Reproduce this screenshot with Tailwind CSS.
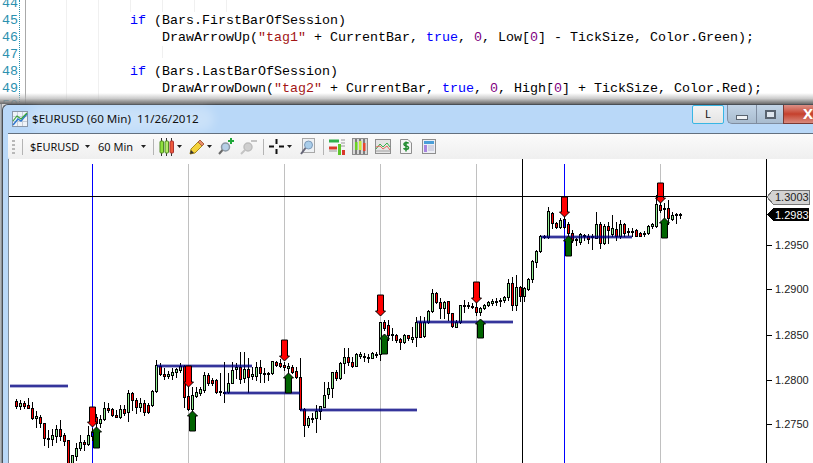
<!doctype html>
<html>
<head>
<meta charset="utf-8">
<script src="https://cdn.jsdelivr.net/npm/@tailwindcss/browser@4"></script>
</head>
<body class="m-0 bg-white">
<div class="w-[813px] h-[463px] overflow-hidden flex flex-col bg-white">

  <!-- code editor -->
  <div class="relative h-[104px] shrink-0 overflow-hidden flex font-['Liberation_Mono',monospace] text-[13.33px] leading-[17px] text-black">
    <div class="w-[26px] shrink-0 pl-[2px] text-[#2b91af] border-r border-[#a9a9a9] -mt-[5px]">
      <div>44</div><div>45</div><div>46</div><div>47</div><div>48</div><div>49</div><div>50</div>
    </div>
    <div class="absolute left-[19px] top-0 bottom-0 border-l border-dotted border-[#2b91af]"></div>
    <div class="absolute left-[66px] top-0 bottom-0 border-l border-[#f0f0f0]"></div>
    <div class="absolute left-[98px] top-0 bottom-0 border-l border-[#f0f0f0]"></div>
    <div class="absolute left-[130px] top-0 h-[12px] border-l border-[#f0f0f0]"></div>
    <div class="absolute left-[162px] top-0 h-[12px] border-l border-[#f0f0f0]"></div>
    <div class="absolute left-[162px] top-[46px] h-[12px] border-l border-[#f0f0f0]"></div>
    <div class="absolute left-[194px] top-0 h-[12px] border-l border-[#f0f0f0]"></div>
    <div class="absolute left-[226px] top-0 h-[12px] border-l border-[#f0f0f0]"></div>
    <div class="flex-1 pl-[104px] -mt-[5px]">
      <div class="h-[17px]"></div>
      <div class="whitespace-pre"><span class="text-[#0000ff]">if</span> (Bars.FirstBarOfSession)</div>
      <div class="whitespace-pre">    DrawArrowUp(<span class="text-[#a31515]">"tag1"</span> + CurrentBar, <span class="text-[#0000ff]">true</span>, <span class="text-[#800080]">0</span>, Low[<span class="text-[#800080]">0</span>] - TickSize, Color.Green);</div>
      <div class="h-[17px]"></div>
      <div class="whitespace-pre"><span class="text-[#0000ff]">if</span> (Bars.LastBarOfSession)</div>
      <div class="whitespace-pre">    DrawArrowDown(<span class="text-[#a31515]">"tag2"</span> + CurrentBar, <span class="text-[#0000ff]">true</span>, <span class="text-[#800080]">0</span>, High[<span class="text-[#800080]">0</span>] + TickSize, Color.Red);</div>
    </div>
    <div class="absolute left-0 right-0 bottom-0 h-[11px] bg-gradient-to-b from-white/0 via-[#b5b5b5]/70 to-[#6a6a6a]"></div>
  </div>

  <div class="flex-1 flex bg-[#d8d8d8] min-h-0">
    <div class="w-[2px] shrink-0 bg-gradient-to-r from-[#c4c8cc] to-[#7c8288]"></div>

    <!-- chart window -->
    <div class="relative flex-1 flex flex-col border-t border-l border-[#4a4f55] rounded-tl-[6px] bg-[#b9d8f8] font-['Noto_Sans','Open_Sans',sans-serif] text-[#111]">

      <!-- title bar -->
      <div class="relative h-[28px] shrink-0 flex items-center pl-[9px] gap-[4px]">
        <div class="absolute left-[26px] top-[2px] w-[185px] h-[24px] bg-white/25 blur-[5px] rounded-full"></div>
        <svg class="relative w-[16px] h-[16px] shrink-0" viewBox="0 0 16 16">
          <rect x=".5" y=".5" width="15" height="15" fill="#eef3f8" stroke="#8a97a8"/>
          <path d="M1 5.500h14M1 10.500h14M5.500 1v14M10.500 1v14" stroke="#c5cdd8" stroke-width="1"/>
          <path d="M1 14 6 8l3 2 6-7" fill="none" stroke="#2f78d0" stroke-width="1.500"/>
          <path d="M1 10 5 5l4 3 6-6" fill="none" stroke="#3aa53a" stroke-width="1.200"/>
        </svg>
        <span class="relative text-[11.6px] leading-none whitespace-pre">$EURUSD (60 Min)  11/26/2012</span>
        <div class="absolute right-0 top-0 flex h-[19px]">
          <div class="w-[32px] h-[19px] flex items-center justify-center border border-[#38b6e4] rounded-[2px] bg-gradient-to-b from-[#f4f4f4] to-[#e4e4e4] text-[11px] text-[#111] mr-[3px]">L</div>
          <div class="w-[29px] flex items-center justify-center bg-gradient-to-b from-[#c2d4e6] to-[#a9bccf] border-l border-b border-[#7f8da0] rounded-bl-[5px]">
            <div class="w-[12px] h-[5px] mt-[6px] bg-[#f0f3f6] border border-[#59636f]"></div>
          </div>
          <div class="w-[27px] flex items-center justify-center bg-gradient-to-b from-[#c2d4e6] to-[#a9bccf] border-l border-b border-[#7f8da0]">
            <div class="w-[11px] h-[9px] border-2 border-[#59636f] bg-[#dfe6ee]"></div>
          </div>
          <div class="w-[30px] flex items-start justify-end bg-gradient-to-b from-[#dc8f86] via-[#c5402c] to-[#d8897e] border-l border-b border-[#7a3a34] text-white text-[15px] leading-[17px] font-bold">X</div>
        </div>
      </div>

      <!-- toolbar -->
      <div class="relative ml-[5px] h-[26px] shrink-0 flex items-center border-t border-[#63707f] bg-gradient-to-b from-[#fbfbfb] to-[#efefef] text-[11px] leading-none rounded-bl-[2px] whitespace-nowrap">
        <div class="flex flex-col gap-[2px] ml-[4px] mr-[7px]">
          <i class="block w-[3px] h-[2px] bg-[#b8b8b8]"></i><i class="block w-[3px] h-[2px] bg-[#b8b8b8]"></i><i class="block w-[3px] h-[2px] bg-[#b8b8b8]"></i><i class="block w-[3px] h-[2px] bg-[#b8b8b8]"></i>
        </div>
        <div class="w-px h-[16px] bg-[#b4b4b4] mr-[7px]"></div>
        <span class="w-[49px] shrink-0">$EURUSD</span>
        <svg class="w-[5px] h-[3px] ml-[6px] mr-[8px]" viewBox="0 0 5 3"><path d="M0 0h5L2.500 3z" fill="#222"/></svg>
        <span class="w-[37px] shrink-0">60 Min</span>
        <svg class="w-[5px] h-[3px] ml-[6px] mr-[7px]" viewBox="0 0 5 3"><path d="M0 0h5L2.500 3z" fill="#222"/></svg>
        <div class="w-px h-[16px] bg-[#b4b4b4] mr-[5px]"></div>
        <svg class="w-[15px] h-[18px]" viewBox="0 0 15 18">
          <path d="M2.500 0v18M7.500 0v18M12.500 0v18" stroke="#333"/>
          <rect x="1" y="3" width="3.500" height="12" rx="1" fill="#8fe03c" stroke="#4f8a22"/>
          <rect x="6" y="3" width="3.500" height="12" rx="1" fill="#b4ec6a" stroke="#4f8a22"/>
          <rect x="11" y="3" width="3.500" height="12" rx="1" fill="#ef5a3c" stroke="#a33"/>
        </svg>
        <svg class="w-[5px] h-[3px] ml-[3px] mr-[7px]" viewBox="0 0 5 3"><path d="M0 0h5L2.500 3z" fill="#222"/></svg>
        <svg class="w-[16px] h-[16px]" viewBox="0 0 16 16">
          <path d="M1 15l1-5L11 1l4 4-9 9z" fill="#f5d33c" stroke="#a98a1e"/>
          <path d="M11 1l4 4-2 2-4-4z" fill="#e88d6a" stroke="#a8623f"/>
          <path d="M1 15l1-4 3 3z" fill="#333"/>
        </svg>
        <svg class="w-[5px] h-[3px] ml-[2px] mr-[6px]" viewBox="0 0 5 3"><path d="M0 0h5L2.500 3z" fill="#222"/></svg>
        <svg class="w-[17px] h-[17px]" viewBox="0 0 17 17">
          <circle cx="7.500" cy="9" r="4" fill="#b6cfe6" stroke="#8c98a4" stroke-width="1.500"/>
          <path d="M4.500 12 1 16" stroke="#6a6a6a" stroke-width="2"/>
          <path d="M13 0v6M10 3h6" stroke="#1fa83a" stroke-width="2"/>
        </svg>
        <svg class="w-[17px] h-[17px] ml-[5px]" viewBox="0 0 17 17">
          <circle cx="8" cy="9" r="4" fill="#cfcfcf" stroke="#bdbdbd" stroke-width="1.500"/>
          <path d="M5 12 1 16" stroke="#c4c4c4" stroke-width="2"/>
          <path d="M11 3h6" stroke="#c4c4c4" stroke-width="2"/>
        </svg>
        <div class="w-px h-[16px] bg-[#b4b4b4] ml-[6px] mr-[5px]"></div>
        <svg class="w-[15px] h-[15px]" viewBox="0 0 15 15">
          <path d="M0 7.500h5M10 7.500h5M7.500 0v5M7.500 10v5" stroke="#111" stroke-width="2"/>
        </svg>
        <svg class="w-[5px] h-[3px] ml-[3px] mr-[8px]" viewBox="0 0 5 3"><path d="M0 0h5L2.500 3z" fill="#222"/></svg>
        <svg class="w-[15px] h-[17px]" viewBox="0 0 15 17">
          <rect x="2.500" y=".5" width="12" height="14" fill="#eef1f4" stroke="#a8a8a8"/>
          <circle cx="8.500" cy="7" r="4" fill="#a9cdea" stroke="#7e9ab8"/>
          <path d="M5.500 10 1 16" stroke="#667" stroke-width="2"/>
        </svg>
        <div class="w-px h-[16px] bg-[#b4b4b4] ml-[8px] mr-[5px]"></div>
        <svg class="w-[16px] h-[17px]" viewBox="0 0 16 17">
          <path d="M0 3h10" stroke="#2fb04a" stroke-width="3"/>
          <path d="M0 10h8" stroke="#d9392b" stroke-width="3"/>
          <rect x="9" y="6" width="3" height="11" fill="#5ec52a"/>
          <rect x="13" y="12" width="3" height="5" fill="#d9392b"/>
          <path d="M12 2h4M12 5h4M12 8h4M0 13h8" stroke="#999"/>
        </svg>
        <svg class="w-[16px] h-[17px] ml-[7px]" viewBox="0 0 16 17">
          <rect x=".5" y=".5" width="15" height="16" fill="#d8d8d8" stroke="#8e8e8e"/>
          <path d="M4 1v15M8 1v15M12 1v15" stroke="#222"/>
          <rect x="3" y="4" width="2.500" height="8" fill="#69d224"/>
          <rect x="7" y="3" width="2.500" height="9" fill="#c6ea3a"/>
          <rect x="11" y="5" width="2.500" height="8" fill="#e8452e"/>
        </svg>
        <svg class="w-[16px] h-[15px] ml-[7px]" viewBox="0 0 16 15">
          <rect x=".5" y=".5" width="15" height="14" fill="#e4e4e4" stroke="#8e8e8e"/>
          <path d="M1 10 5 5l3 3 4-4 3 4" fill="none" stroke="#38b04a"/>
          <path d="M1 8l4-1 3 3 4-3 3 4" fill="none" stroke="#e06a5a"/>
          <path d="M1 12h14" stroke="#a0a0a0"/>
        </svg>
        <svg class="w-[12px] h-[15px] ml-[9px]" viewBox="0 0 12 15">
          <path d="M.5.5H8L11.500 4v10.500H.5z" fill="#f4f4f4" stroke="#8e8e8e"/>
          <path d="M8.500 4.500c-1-1.500-5-1-4.500 1 .5 2 5 1 4.500 3.500-.5 2-4 1.500-5 .2M6 2.500v10" fill="none" stroke="#1f8a2e" stroke-width="1.500"/>
        </svg>
        <svg class="w-[14px] h-[15px] ml-[10px]" viewBox="0 0 14 15">
          <rect x=".5" y=".5" width="13" height="14" fill="#eceef4" stroke="#8e8e8e"/>
          <rect x="2" y="2" width="10" height="3" fill="#4a9ed8"/>
          <rect x="2" y="6" width="3" height="7" fill="#a884e0"/>
          <path d="M6 7h6M6 9h6M6 11h6" stroke="#b8b8d0"/>
        </svg>
      </div>

      <!-- chart -->
      <div class="relative flex-1 ml-[5px] bg-white overflow-hidden border-l border-[#7f8c9a]">
        <svg id="chart" class="block w-full h-full" viewBox="9 159 804 304" shape-rendering="crispEdges" font-family="Liberation Sans, sans-serif" font-size="11"></svg>
      </div>
    </div>
  </div>
</div>

<script>
const NS='http://www.w3.org/2000/svg', svg=document.getElementById('chart');
function el(n,a,t){const e=document.createElementNS(NS,n);for(const k in a)e.setAttribute(k,a[k]);if(t)e.textContent=t;svg.appendChild(e);return e;}
function R(x,y,w,h,f,o){const a={x,y,width:w,height:h,fill:f};if(o)a.opacity=o;el('rect',a);}

// session and time lines
[188,284,380,476,660].forEach(x=>R(x,164,1,299,'#c0c0c0'));
[92,564].forEach(x=>R(x,164,1,299,'#0000ff'));

// candles: colour, body top, body bottom, wick top, wick bottom (crop units: 3 per pixel)
const seg=[
[340,`r183,198,178,203 g190,197,180,208 r190,197,183,205 r196,203,175,205 r203,233,186,236 g228,233,212,260 r232,250,225,260 r250,295,250,315 g294,298,270,320 g286,298,268,315 g268,288,255,305 r268,288,240,300 r286,302,280,315 r300,375,300,375 g345,375,345,375 g325,348,310,360 g307,325,285,330 r307,313,300,330 g286,313,258,315 b275,287,265,300 r230,248,222,270 g238,248,225,260 g203,238,187,240 r203,210,190,215 r208,226,205,228 r225,230,210,232 g207,230,195,235 r208,218,195,225 g160,215,150,242 r160,180,155,210 r180,200,175,218 g190,200,175,212 r190,215,180,225 r196,215,190,218 g153,196,150,198 g75,153,60,155 r78,103,70,105 r103,108,85,118 g103,108,92,115 g95,105,85,118 g88,95,85,110 g78,90,70,95 r78,170,75,200 r168,208,140,210 g165,208,140,240 g157,168,140,172 g148,160,140,165 g105,150,95,155 r105,128,98,135 r120,128,115,135 r120,155,118,160 r152,157,100,165 g155,158,65,185 g130,155,100,158 g90,130,65,130 g82,88,68,115 r82,118,35,130 g88,115,35,125 r88,110,55,155 g103,108,80,118 g80,108,65,120 r80,100,60,125`],
[330,`g130,133,115,155 g130,133,125,150 g93,130,93,132 r95,105,93,108 r100,108,88,112 r105,112,95,120 g108,115,100,135 r112,125,105,130 r123,140,110,145 r140,238,85,240 r238,285,235,318 g265,285,258,290 g265,268,250,275 g242,265,225,305 g228,243,228,268 g195,230,155,232 g175,193,155,205 g127,175,125,200 r127,145,120,150 g100,145,95,148 g82,100,55,130 r82,97,55,105 r95,107,80,110 g72,107,68,108 g72,77,65,85 r77,82,70,92 r80,83,72,95`],
[180,`g520,533,515,535 g522,525,515,530 g425,522,425,540 r425,445,420,450 r435,465,420,480 g462,466,445,480 r466,480,462,485 r477,485,475,507 g466,485,462,490 r466,475,465,480 g470,476,440,485 g425,470,410,497 r425,470,408,470 g425,467,410,470 g392,425,390,430 g340,392,327,395 r340,366,335,370 r366,385,355,415 g366,385,362,415 r364,400,362,420 r400,438,400,440 g425,440,420,440 g376,425,375,428 g375,378,360,395 g375,378,365,385 g377,380,370,385 r380,397,355,405 g385,397,380,405 g376,385,372,388 g367,374,362,378 g364,370,358,375 g362,365,355,375 g360,363,355,378 g352,360,348,365 g310,352,298,360 r310,376,290,390 g322,376,285,390 r322,348,318,362 g325,348,320,362 g298,328,295,330 g243,298,240,305 g212,245,210,262 g168,212,165,215 g168,171,165,175 g94,170,82,175 r98,130,95,145 r130,140,125,145 g120,142,115,145`],
[165,`b163,185,150,190 r177,205,172,210 r205,225,195,230 g222,225,218,240 g208,232,205,238 g210,214,207,225 r212,222,207,235 g212,217,207,252 g178,218,142,220 r178,235,170,250 g182,235,178,238 r182,195,172,235 g190,208,150,212 r192,212,170,225 g177,212,165,220 r177,203,175,212 g198,202,190,210 g198,202,190,212 r196,212,192,214 r203,212,200,212 g203,207,198,212 g183,205,180,208 g178,183,175,188 g117,183,90,185 r120,135,95,140 g130,133,115,155 r130,160,105,178 g150,162,140,165 g148,151,143,175 g148,151,143,160`]
];
const col={g:'#90ee90',r:'#ff0000',b:'#0000ff'};
let k=0;
seg.forEach(([y0,s])=>s.trim().split(/\s+/).forEach(c=>{
  const t=c[0],[bt,bb,wt,wb]=c.slice(1).split(',').map(v=>y0+Math.round(+v/3));
  const x=16+4*k++;
  R(x,wt,1,wb-wt+1,'#000');
  R(x-1,bt,3,Math.max(bb-bt+1,2),'#000');
  if(bb-bt>=2)R(x,bt+1,1,bb-bt-1,col[t]);
}));

// support and resistance levels
[[10,68,385],[157,252,365],[224,300,392],[300,417,409],[417,513,321],[541,632,236]].forEach(([a,b,y])=>{
  R(a,y-1,b-a,4,'#000080',.3);
  R(a,y,b-a,2,'#000080',.7);
});

// arrows
const arrow=(x,tip,end,fill,down)=>{
  const d=down?-1:1,b=tip+d*5;
  el('polygon',{points:`${x-2.5},${end} ${x+3.5},${end} ${x+3.5},${b} ${x+5.5},${b} ${x+.5},${tip} ${x-4.5},${b} ${x-2.5},${b}`,fill,stroke:'#000','shape-rendering':'geometricPrecision'});
};
[[92,427,407],[188,387,366],[284,361,340],[380,316,295],[476,303,282],[564,217,197],[660,203,183]].forEach(a=>arrow(a[0],a[1],a[2],'#ff0000',true));
[[96,427,448],[192,411,431],[288,373,393],[384,334,354],[480,319,338],[568,236,256],[664,218,238]].forEach(a=>arrow(a[0],a[1],a[2],'#006400',false));

// crosshair and axis
R(522,159,1,304,'#000');
R(9,196,757,1,'#000');
R(766,159,1,304,'#000');
[[1.2950,245],[1.29,289],[1.285,335],[1.28,380],[1.275,424]].forEach(([v,y])=>{
  R(767,y,5,1,'#000');
  el('text',{x:775,y:y+4,fill:'#222','shape-rendering':'auto'},v.toFixed(4));
});
el('polygon',{points:'767,197 773,190 809,190 809,204 773,204',fill:'#d3d3d3',stroke:'#777'});
el('text',{x:775,y:201,fill:'#222'},'1.3003');
el('polygon',{points:'767,214.500 773,208 809,208 809,221 773,221',fill:'#000'});
el('text',{x:775,y:219,fill:'#fff'},'1.2983');
</script>
</body>
</html>
